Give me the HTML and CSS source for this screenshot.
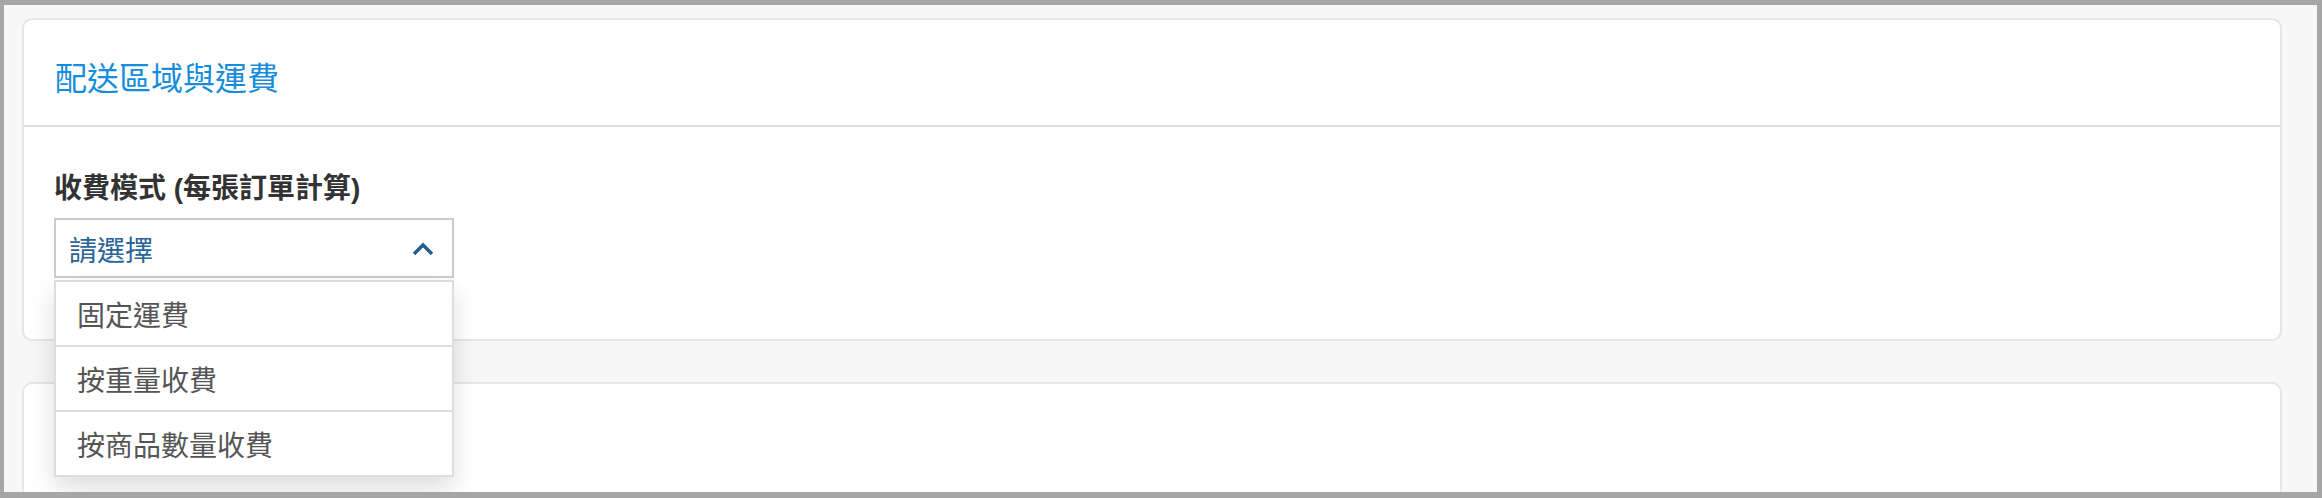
FILE: index.html
```html
<!DOCTYPE html>
<html lang="zh-Hant">
<head>
<meta charset="utf-8">
<title>配送區域與運費</title>
<link rel="stylesheet" href="styles.css">
</head>
<body>
<div class="frame">
  <main class="page">
    <section class="card">
      <header class="card-header">
        <h2 class="card-title">配送區域與運費</h2>
      </header>
      <div class="card-body">
        <div class="form-group">
          <label class="field-label">收費模式 (每張訂單計算)</label>
          <div class="select-wrap">
            <div class="select">
              <span class="select-value">請選擇</span>
              <svg class="chevron" width="22" height="14" viewBox="0 0 22 14" aria-hidden="true">
                <polyline points="2,12 11,3 20,12" fill="none" stroke="currentColor" stroke-width="3.4" stroke-linecap="butt" stroke-linejoin="miter"/>
              </svg>
            </div>
            <ul class="menu">
              <li class="menu-item">固定運費</li>
              <li class="menu-item">按重量收費</li>
              <li class="menu-item">按商品數量收費</li>
            </ul>
          </div>
        </div>
      </div>
    </section>
    <section class="card card-next"></section>
  </main>
</div>
</body>
</html>
```

FILE: styles.css
```css
* { box-sizing: border-box; }

html, body {
  margin: 0;
  padding: 0;
}

body {
  background: #a6a6a6;
  font-family: "Liberation Sans", "Noto Sans CJK TC", sans-serif;
}

.frame {
  width: 2322px;
  height: 498px;
  padding: 5px 5px 6px 4px;
}

.page {
  height: 487px;
  background: #f7f7f7;
  padding: 13px 35px 0 18px;
  overflow: hidden;
  display: flex;
  flex-direction: column;
  gap: 41px;
}

.card {
  background: #fff;
  border: 2px solid #e6e6e6;
  border-radius: 10px;
  flex: none;
}

.card-header {
  border-bottom: 2px solid #dddddd;
  padding: 36px 0 29px 31px;
}

.card-title {
  margin: 0;
  font-family: "Noto Sans CJK TC", sans-serif;
  font-weight: 400;
  font-size: 32px;
  line-height: 40px;
  color: #168ddc;
}

.card-body {
  padding: 42px 0 61px 30px;
}

.form-group {
  display: flex;
  flex-direction: column;
  align-items: flex-start;
}

.field-label {
  font-weight: 700;
  font-size: 28px;
  line-height: 40px;
  color: #333;
  margin-bottom: 9px;
}

.select-wrap {
  position: relative;
  width: 400px;
}

.select {
  height: 60px;
  border: 2px solid #cccccc;
  background: #fff;
  display: flex;
  align-items: center;
  justify-content: space-between;
  padding: 0 18px 0 13px;
}

.select-value {
  font-family: "Noto Sans CJK TC", sans-serif;
  font-size: 28px;
  line-height: 40px;
  color: #2a6496;
  margin-top: 2px;
}

.chevron {
  color: #245d8f;
  display: block;
  margin-top: 1px;
}

.menu {
  position: absolute;
  top: 62px;
  left: 0;
  width: 400px;
  margin: 0;
  padding: 0;
  list-style: none;
  background: #fff;
  border: 2px solid #dddddd;
  box-shadow: 0 12px 24px rgba(0, 0, 0, 0.13);
  z-index: 10;
}

.menu-item {
  height: 63px;
  display: flex;
  align-items: center;
  padding-left: 21px;
  font-family: "Noto Sans CJK TC", sans-serif;
  font-size: 28px;
  line-height: 40px;
  color: #555;
}

.menu-item + .menu-item {
  height: 65px;
  border-top: 2px solid #dddddd;
}

.card-next {
  height: 200px;
}
```
